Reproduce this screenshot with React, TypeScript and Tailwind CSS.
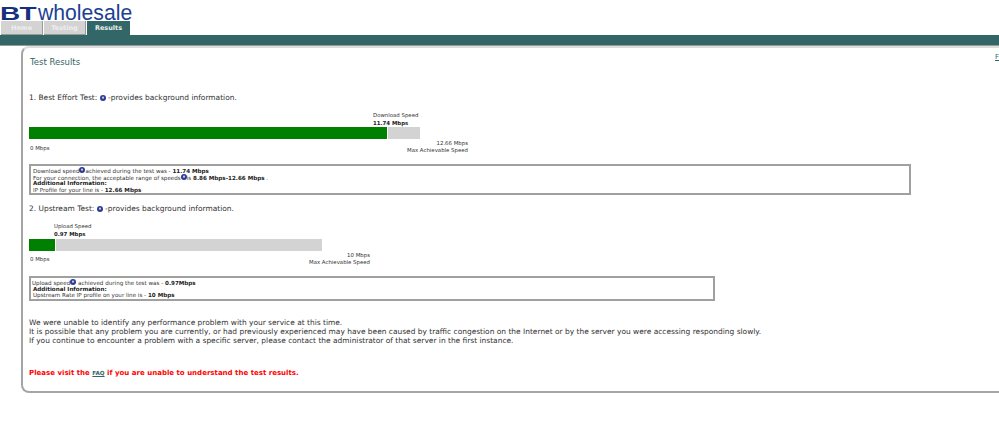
export default function App() {
  const font = "font-['DejaVu_Sans',Verdana,sans-serif]";

  const InfoIcon = () => (
    <svg viewBox="0 0 8 8" className="inline-block w-[6px] h-[6px] align-[-0.5px]">
      <circle cx="4" cy="4" r="4" fill="#2f3a94" />
      <circle cx="4" cy="3.6" r="1.5" fill="#c6cbe8" />
    </svg>
  );

  return (
    <div className={`${font} w-[999px] h-[433px] overflow-hidden bg-white text-[#333]`}>
      {/* Logo */}
      <div className="h-[21px] pt-[2px] flex items-baseline font-['Liberation_Sans',Arial,sans-serif] text-[#16307f] leading-[21px]">
        <span className="text-[17.5px] font-bold scale-x-[1.6] origin-left w-[38px] tracking-[-0.5px]">BT</span>
        <span className="text-[21.2px] text-[#1c3f94]">wholesale</span>
      </div>

      {/* Tabs */}
      <div className="relative flex h-[14px] pl-[1px] gap-[1px] text-[6.5px] font-bold leading-[14px] text-center">
        <div className="w-[42px] bg-[#d3d3d3] text-[#eee] border-r border-b border-[#999]">Home</div>
        <div className="w-[42px] bg-[#d3d3d3] text-[#eee] border-r border-b border-[#999]">Testing</div>
        <div className="w-[43px] bg-[#336666] text-[#e8efef]">Results</div>
      </div>
      <div className="h-[11px] bg-[#336666] border-b border-[#999]" />

      {/* Panel */}
      <div className="relative h-[347px] ml-[21px] -mr-[20px] border-2 border-r-0 border-[#a5a5a5] rounded-l-[8px] border-t-[#ddd] pl-[6px] pt-[9px] text-[7.46px] leading-[9px]">
        <a className="absolute right-[20px] top-[5px] text-[7px] underline text-[#336666] w-[4px] overflow-hidden">F</a>
        <h1 className="pl-[1px] text-[8.5px] leading-[11px] text-[#336666]">Test Results</h1>

        <p className="mt-[25px] h-[9px]">1. Best Effort Test: <InfoIcon /> -provides background information.</p>

        {/* Download */}
        <div className="mt-[9px] w-[439px] text-[5.4px] leading-[8px]">
          <div className="pl-[344px]">Download Speed</div>
          <div className="pl-[344px] font-bold text-[#222]">11.74 Mbps</div>
          <div className="flex gap-[1px] h-[12px] w-[391px]">
            <div className="w-[358px] bg-[#008000]" />
            <div className="flex-1 bg-[#d3d3d3]" />
          </div>
          <div className="flex justify-between mt-[1px]">
            <span className="pt-[4px] pl-[1px]">0 Mbps</span>
            <span className="text-right leading-[7px]">12.66 Mbps<br />Max Achievable Speed</span>
          </div>
        </div>
        <div className="mt-[10px] w-[882px] h-[31px] border-[2px] border-[#a0a0a0] pl-[2px] pt-[1px] text-[5.6px]">
          <div className="h-[6.5px] leading-[6.5px]">Download speed<InfoIcon />achieved during the test was - <b className="text-[#222]">11.74 Mbps</b></div>
          <div className="h-[6.5px] leading-[6.5px]">For your connection, the acceptable range of speeds<InfoIcon />is <b className="text-[#222]">8.86 Mbps-12.66 Mbps</b> .</div>
          <div className="h-[6.5px] leading-[6.5px] font-bold text-[#222]">Additional Information:</div>
          <div className="h-[6.5px] leading-[6.5px]">IP Profile for your line is - <b className="text-[#222]">12.66 Mbps</b></div>
        </div>

        <p className="mt-[9px] h-[9px]">2. Upstream Test: <InfoIcon /> -provides background information.</p>

        {/* Upload */}
        <div className="mt-[9px] w-[341px] text-[5.4px] leading-[8px]">
          <div className="pl-[25px]">Upload Speed</div>
          <div className="pl-[25px] font-bold text-[#222]">0.97 Mbps</div>
          <div className="flex gap-[1px] h-[12px] w-[293px] mt-[1px]">
            <div className="w-[26px] bg-[#008000]" />
            <div className="flex-1 bg-[#d3d3d3]" />
          </div>
          <div className="flex justify-between mt-[1px]">
            <span className="pt-[3px] pl-[1px]">0 Mbps</span>
            <span className="text-right leading-[7px]">10 Mbps<br />Max Achievable Speed</span>
          </div>
        </div>
        <div className="mt-[10px] w-[686px] h-[25px] border-[2px] border-[#a0a0a0] pl-[1px] pt-[1px] text-[5.6px]">
          <div className="h-[6.5px] leading-[6.5px]">Upload speed<InfoIcon /> achieved during the test was - <b className="text-[#222]">0.97Mbps</b></div>
          <div className="h-[6.5px] leading-[6.5px] font-bold text-[#222] pl-[1px]">Additional Information:</div>
          <div className="h-[6.5px] leading-[6.5px] pl-[1px]">Upstream Rate IP profile on your line is - <b className="text-[#222]">10 Mbps</b></div>
        </div>

        <div className="mt-[17px]">
          <p>We were unable to identify any performance problem with your service at this time.</p>
          <p>It is possible that any problem you are currently, or had previously experienced may have been caused by traffic congestion on the Internet or by the server you were accessing responding slowly.</p>
          <p>If you continue to encounter a problem with a specific server, please contact the administrator of that server in the first instance.</p>
        </div>

        <p className="mt-[23px] text-[7.03px] font-bold text-[#ff0000]">
          Please visit the <a className="text-[5.6px] underline text-[#336666]">FAQ</a> if you are unable to understand the test results.
        </p>
      </div>
    </div>
  );
}
